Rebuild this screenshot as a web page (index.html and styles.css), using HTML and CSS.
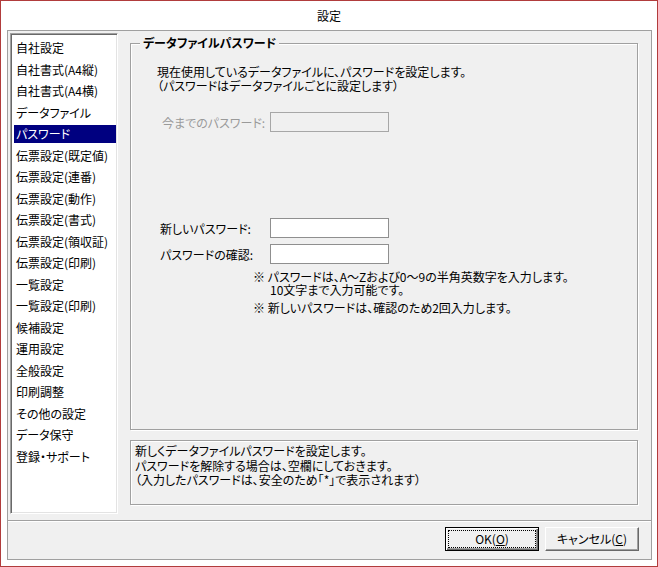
FILE: index.html
```html
<!DOCTYPE html>
<html lang="ja">
<head>
<meta charset="utf-8">
<title>設定</title>
<link rel="stylesheet" href="styles.css">
</head>
<body>
<div class="window">
  <div class="titlebar">設定</div>
  <div class="frame">
    <div class="main">
      <ul class="list">
        <li>自社設定</li>
        <li>自社書式(A4縦)</li>
        <li>自社書式(A4横)</li>
        <li>データファイル</li>
        <li class="selected">パスワード</li>
        <li>伝票設定(既定値)</li>
        <li>伝票設定(連番)</li>
        <li>伝票設定(動作)</li>
        <li>伝票設定(書式)</li>
        <li>伝票設定(領収証)</li>
        <li>伝票設定(印刷)</li>
        <li>一覧設定</li>
        <li>一覧設定(印刷)</li>
        <li>候補設定</li>
        <li>運用設定</li>
        <li>全般設定</li>
        <li>印刷調整</li>
        <li>その他の設定</li>
        <li>データ保守</li>
        <li>登録・サポート</li>
      </ul>
      <div class="content">
        <fieldset class="group">
          <legend>データファイルパスワード</legend>
          <div class="intro">
            <div>現在使用しているデータファイルに、パスワードを設定します。</div>
            <div>（パスワードはデータファイルごとに設定します）</div>
          </div>
          <div class="row row-old disabled">
            <span class="label">今までのパスワード:</span>
            <span class="field"></span>
          </div>
          <div class="row row-new">
            <span class="label">新しいパスワード:</span>
            <span class="field"></span>
          </div>
          <div class="row row-confirm">
            <span class="label">パスワードの確認:</span>
            <span class="field"></span>
          </div>
          <div class="note note-first">※ パスワードは、A～Zおよび0～9の半角英数字を入力します。</div>
          <div class="note note-cont">10文字まで入力可能です。</div>
          <div class="note note-second">※ 新しいパスワードは、確認のため2回入力します。</div>
        </fieldset>
        <div class="desc">
          <div>新しくデータファイルパスワードを設定します。</div>
          <div>パスワードを解除する場合は、空欄にしておきます。</div>
          <div>（入力したパスワードは、安全のため「*」で表示されます）</div>
        </div>
      </div>
    </div>
    <div class="buttons">
      <button class="btn btn-default">OK(<u>O</u>)</button>
      <button class="btn">キャンセル(<u>C</u>)</button>
    </div>
  </div>
</div>
</body>
</html>
```

FILE: styles.css
```css
html, body {
  margin: 0;
  padding: 0;
}

body {
  width: 658px;
  height: 567px;
  overflow: hidden;
  background: #fff;
  font-family: "Noto Sans CJK JP", "Noto Sans", sans-serif;
  font-size: 12px;
  color: #000;
  font-feature-settings: "palt" 1;
}

.window {
  box-sizing: border-box;
  width: 658px;
  height: 567px;
  border: 1px solid #b13c3c;
  background: #fff;
  display: flex;
  flex-direction: column;
}

.titlebar {
  height: 29px;
  line-height: 29px;
  text-align: center;
  color: #000;
}

.frame {
  box-sizing: border-box;
  margin: 0 5px 0 6px;
  height: 530px;
  border: 1px solid #a0a0a0;
  background: #f0f0f0;
  display: flex;
  flex-direction: column;
}

.main {
  height: 489px;
  box-sizing: border-box;
  display: flex;
  padding: 2px 13px 0 2px;
}

.list {
  box-sizing: border-box;
  width: 108px;
  height: 481px;
  margin: 0;
  padding: 5px 1px 0 3px;
  list-style: none;
  background: #fff;
  border: 1px solid;
  border-color: #a0a0a0 #fff #fff #a0a0a0;
  box-shadow: inset 1px 1px 0 #696969, inset -1px -1px 0 #e3e3e3;
  flex: none;
}

.list li {
  height: 18px;
  line-height: 18px;
  margin-bottom: 3.5px;
  padding-left: 2px;
  white-space: nowrap;
}

.list li.selected {
  background: #000080;
  color: #fff;
}

.content {
  margin: 3px 0 0 12px;
  width: 508px;
  flex: none;
  display: flex;
  flex-direction: column;
}

.group {
  box-sizing: border-box;
  margin: 0;
  padding: 0;
  min-width: 0;
  height: 394px;
  border: 1px solid #a0a0a0;
  box-shadow: inset 1px 1px 0 #fff, 1px 1px 0 #fff;
}

.group legend {
  margin-left: 9px;
  padding: 0 3px;
  font-weight: bold;
  line-height: 14px;
  background: #f0f0f0;
}

.intro {
  margin: 15px 0 0 26px;
  line-height: 14px;
}

.row {
  display: flex;
  align-items: center;
  height: 20px;
}

.row .field {
  box-sizing: border-box;
  width: 119px;
  height: 20px;
  background: #fff;
  border: 1px solid #8f8f8f;
}

.row-old {
  margin: 19px 0 0 31px;
}

.row-old .label {
  width: 108px;
}

.disabled .label {
  color: #9a9a9a;
}

.disabled .field {
  background: #f0f0f0;
  border-color: #a7a7a7;
}

.row-new {
  margin: 86px 0 0 29px;
}

.row-confirm {
  margin: 6px 0 0 29px;
}

.row-new .label,
.row-confirm .label {
  width: 110px;
}

.note {
  line-height: 13px;
  white-space: nowrap;
}

.note-first {
  margin: 6px 0 0 122px;
}

.note-cont {
  margin-left: 139px;
}

.note-second {
  margin: 5px 0 0 122px;
}

.desc {
  box-sizing: border-box;
  margin-top: 10px;
  height: 65px;
  padding: 3px 4px;
  line-height: 14.5px;
  border: 1px solid #a0a0a0;
  box-shadow: inset 1px 1px 0 #fff, 1px 1px 0 #fff;
}

.buttons {
  flex: 1;
  border-top: 1px solid #a0a0a0;
  box-shadow: inset 0 1px 0 #fff;
  display: flex;
  justify-content: flex-end;
  align-items: flex-start;
  gap: 6px;
  padding: 6px 12px 0 0;
}

.btn {
  box-sizing: border-box;
  width: 94px;
  height: 24px;
  margin: 0;
  padding: 0;
  font: inherit;
  color: #000;
  background: #f0f0f0;
  border: 1px solid;
  border-color: #fff #696969 #696969 #fff;
  box-shadow: inset -1px -1px 0 #a0a0a0;
  line-height: 20px;
  text-align: center;
}

.btn u {
  text-underline-offset: 1px;
}

.btn-default {
  border: 1px solid #000;
  box-shadow: inset 1px 1px 0 #fff, inset -1px -1px 0 #696969, inset -2px -2px 0 #a0a0a0;
  outline: 1px dotted #000;
  outline-offset: -4px;
}
```
